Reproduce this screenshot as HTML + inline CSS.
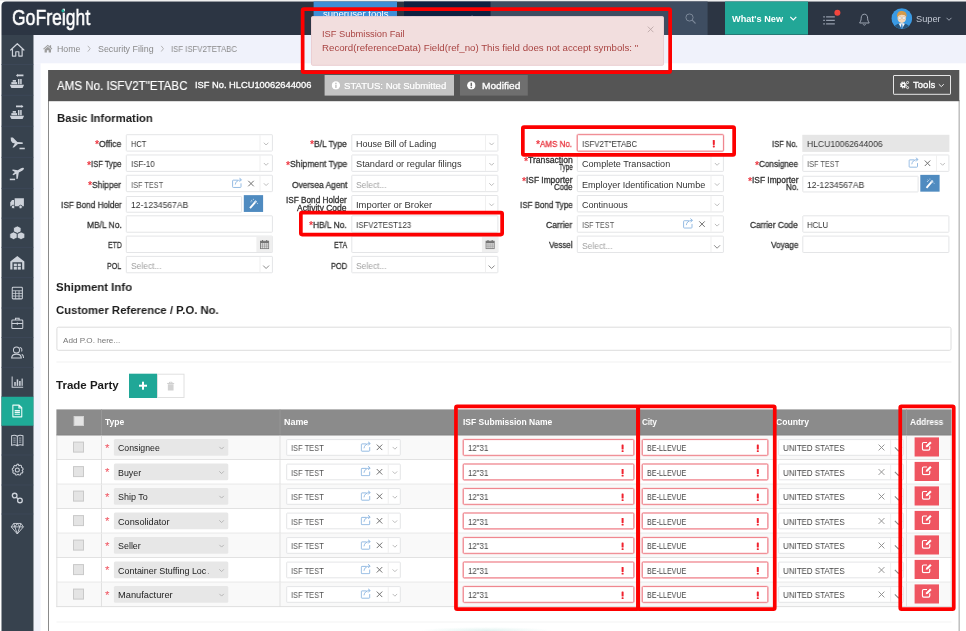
<!DOCTYPE html>
<html><head><meta charset="utf-8"><title>GoFreight ISF</title><style>
*{margin:0;padding:0}
html,body{width:966px;height:631px;overflow:hidden;background:#fff}
body{position:relative;font-family:"Liberation Sans",sans-serif}
body>div,body>span,body>svg{position:absolute;display:block}
body>svg{left:0;top:0;overflow:hidden}
body>span{white-space:nowrap;transform-origin:0 50%;will-change:transform}
</style></head><body>
<svg width="966" height="631" viewBox="0 0 966 631"><rect x="0" y="0" width="966" height="1.1" fill="#efefef"/><path d="M1.5 35V6Q1.5 1.5 6 1.5H966V35Z" fill="#2c3543"/></svg>
<span style="left:11.6px;top:4.35px;font-size:22.6px;line-height:27.12px;color:#fff;transform:scaleX(0.7782);-webkit-text-stroke:.6px #fff;">GoFreight</span>
<svg width="966" height="631" viewBox="0 0 966 631"><rect x="61.6" y="9.5" width="2.5" height="2.8" rx="0.8" fill="#1fb5a0"/><rect x="313.6" y="1.5" width="83.4" height="28.5" fill="#3f8ed6"/></svg>
<span style="left:322.5px;top:8.46px;font-size:9.5px;line-height:11.4px;color:#fff;transform:scaleX(1.0084);">superuser tools</span>
<svg width="966" height="631" viewBox="0 0 966 631"><rect x="404" y="1.5" width="86.6" height="33.5" fill="#0f2140"/></svg>
<span style="left:410px;top:13.92px;font-size:9px;line-height:10.8px;color:#56627c;transform:scaleX(1.0800);">Superuser tools</span>
<svg width="966" height="631" viewBox="0 0 966 631"><rect x="490.6" y="1.5" width="217" height="33.5" fill="#3e4d61"/><svg x="684.5" y="12.5" width="12" height="12" viewBox="0 0 12 12"><circle cx="5" cy="5" r="3.6" fill="none" stroke="#7c8899" stroke-width="1"/><path d="M7.7 7.7 L11 11" stroke="#7c8899" stroke-width="1.1" fill="none"/></svg><rect x="725" y="1.5" width="83" height="33.1" fill="#22a797"/></svg>
<span style="left:732px;top:13.52px;font-size:9px;line-height:10.8px;font-weight:bold;color:#fff;transform:scaleX(1.0170);">What's New</span>
<svg width="966" height="631" viewBox="0 0 966 631"><svg x="789.3" y="15.7" width="8" height="6" viewBox="0 0 8 6"><path d="M1 1.2 L4 4.2 L7 1.2" fill="none" stroke="#fff" stroke-width="1.2"/></svg><svg x="823" y="15.4" width="12" height="10" viewBox="0 0 12 10"><g stroke="#939cab" stroke-width="1.35"><path d="M3.1 1.5H11.8M3.1 5H11.8M3.1 8.5H11.8"/><path d="M0.2 1.5H1.9M0.2 5H1.9M0.2 8.5H1.9"/></g></svg><rect x="834.4" y="9.7" width="6" height="6" rx="3" fill="#f2453d"/><svg x="858.4" y="13" width="12" height="14" viewBox="0 0 12 14"><path d="M6 1.2 C3.6 1.2 2.8 3.2 2.8 5.2 C2.8 8 1.5 9 1.2 10 H10.8 C10.5 9 9.2 8 9.2 5.2 C9.2 3.2 8.4 1.2 6 1.2 Z" fill="none" stroke="#aab2c0" stroke-width="0.9"/><path d="M4.8 11.3 C5 12.4 7 12.4 7.2 11.3" fill="none" stroke="#aab2c0" stroke-width="0.9"/></svg><svg x="891.3" y="8.1" width="21" height="21" viewBox="0 0 21 21"><defs><clipPath id="av"><circle cx="10.5" cy="10.5" r="10.4"/></clipPath></defs><g clip-path="url(#av)"><rect width="21" height="21" fill="#3a9ae4"/><path d="M2.6 21 C2.8 16.6 6 15.4 10.5 15.4 C15 15.4 18.2 16.6 18.4 21 Z" fill="#27567f"/><path d="M7.4 15.6 L10.5 21 L13.6 15.6 C12 15 9 15 7.4 15.6 Z" fill="#f7f9fc"/><path d="M9.9 16.2 H11.1 L11.5 21 H9.5 Z" fill="#3f86c9"/><ellipse cx="10.5" cy="9.9" rx="4.3" ry="5.1" fill="#f7d9bb"/><path d="M5.7 9.2 C5.2 4.4 7.8 2.6 10.9 2.8 C14.2 3 15.9 5.2 15.3 9.2 C14.4 7.4 12.8 6.6 9.6 6.8 C7.6 6.9 6.6 7.8 5.7 9.2 Z" fill="#d39a4a"/><rect x="6.9" y="9" width="3" height="1.9" rx=".5" fill="#fff" stroke="#9a8a7a" stroke-width=".35"/><rect x="11.1" y="9" width="3" height="1.9" rx=".5" fill="#fff" stroke="#9a8a7a" stroke-width=".35"/></g></svg></svg>
<span style="left:915.6px;top:13.92px;font-size:9px;line-height:10.8px;color:#c4cad5;transform:scaleX(1.0284);">Super</span>
<svg width="966" height="631" viewBox="0 0 966 631"><svg x="945.5" y="16.8" width="7" height="5" viewBox="0 0 7 5"><path d="M1 1 L3.5 3.5 L6 1" fill="none" stroke="#aab2c0" stroke-width="0.9"/></svg><rect x="1.5" y="35" width="32.2" height="596" fill="#37424e"/><rect x="1.5" y="64" width="32.2" height="0.8" fill="#3e495a"/><rect x="1.5" y="94.8" width="32.2" height="0.8" fill="#3e495a"/><rect x="1.5" y="125.8" width="32.2" height="0.8" fill="#3e495a"/><rect x="1.5" y="156.9" width="32.2" height="0.8" fill="#3e495a"/><rect x="1.5" y="187.9" width="32.2" height="0.8" fill="#3e495a"/><rect x="1.5" y="217.7" width="32.2" height="0.8" fill="#3e495a"/><rect x="1.5" y="246.9" width="32.2" height="0.8" fill="#3e495a"/><rect x="1.5" y="277.3" width="32.2" height="0.8" fill="#3e495a"/><rect x="1.5" y="307.6" width="32.2" height="0.8" fill="#3e495a"/><rect x="1.5" y="337.2" width="32.2" height="0.8" fill="#3e495a"/><rect x="1.5" y="366.9" width="32.2" height="0.8" fill="#3e495a"/><rect x="1.5" y="396.4" width="32.2" height="0.8" fill="#3e495a"/><rect x="1.5" y="425.3" width="32.2" height="0.8" fill="#3e495a"/><rect x="1.5" y="454.6" width="32.2" height="0.8" fill="#3e495a"/><rect x="1.5" y="484.6" width="32.2" height="0.8" fill="#3e495a"/><rect x="1.5" y="513.6" width="32.2" height="0.8" fill="#3e495a"/><rect x="1.5" y="396.8" width="32.2" height="28.9" fill="#1eab97"/><svg x="8.5" y="41.2" width="17.6" height="17.6" viewBox="0 0 16 16"><path d="M2 8 L8 2.3 L14 8 M3.6 7 V13.5 H6.6 V9.6 H9.4 V13.5 H12.4 V7" fill="none" stroke="#cdd2da" stroke-width="1.1" stroke-linejoin="round" stroke-linecap="round"/></svg><svg x="8.5" y="72.2" width="17.6" height="17.6" viewBox="0 0 16 16"><g fill="#cdd2da"><path d="M1.2 11.5 H14.2 L12.8 14.4 H2.6 Z"/><rect x="2.6" y="9" width="5.2" height="1.9"/><rect x="3.8" y="7.1" width="3" height="1.6"/><rect x="8.6" y="6.2" width="1.4" height="4.7"/><rect x="10.6" y="6.2" width="1.4" height="4.7"/><path d="M6.8 2.9 L8.6 1.4 V2.2 H13.6 V3.7 H8.6 V4.4 Z"/></g></svg><svg x="8.5" y="103.2" width="17.6" height="17.6" viewBox="0 0 16 16"><g fill="#cdd2da"><path d="M1.2 11.5 H14.2 L12.8 14.4 H2.6 Z"/><rect x="2.6" y="9" width="5.2" height="1.9"/><rect x="3.8" y="7.1" width="3" height="1.6"/><rect x="8.6" y="6.2" width="1.4" height="4.7"/><rect x="10.6" y="6.2" width="1.4" height="4.7"/><path d="M13.6 2.9 L11.8 1.4 V2.2 H6.8 V3.7 H11.8 V4.4 Z"/></g></svg><svg x="8.5" y="134.2" width="17.6" height="17.6" viewBox="0 0 16 16"><g fill="#cdd2da"><path d="M2 3 L4 3 L8 7 L12 7.4 C13.6 7.6 13.6 9 12 9 L8.6 8.8 L5 12.2 L3.6 12.2 L5.8 8.4 L3.4 7.8 L2.2 6 Z" /><rect x="10" y="12.3" width="4.8" height="1.4"/></g></svg><svg x="8.5" y="164.8" width="17.6" height="17.6" viewBox="0 0 16 16"><g fill="#cdd2da"><path d="M13.8 3 C14.6 3.6 13.6 4.8 12.4 5.4 L9.4 7 L8.4 12.6 L7.2 12.8 L7 8.2 L4.4 9.4 L3.6 8.8 L5.8 6.6 L3 4.8 L4.2 4.2 L8.4 5 L11.4 3.2 C12.4 2.6 13.2 2.6 13.8 3 Z"/><rect x="1.2" y="12.6" width="4.8" height="1.4"/></g></svg><svg x="8.5" y="194.2" width="17.6" height="17.6" viewBox="0 0 16 16"><g fill="#cdd2da"><path d="M5.6 3.6 H14 V11 H5.6 Z"/><path d="M1.6 7.6 L3.2 5.2 H5 V11 H1.6 Z"/><circle cx="4.2" cy="11.6" r="1.6" stroke="#37424e" stroke-width=".7"/><circle cx="11" cy="11.6" r="1.6" stroke="#37424e" stroke-width=".7"/></g></svg><svg x="8.5" y="224.2" width="17.6" height="17.6" viewBox="0 0 16 16"><g fill="#cdd2da" stroke="#37424e" stroke-width=".7"><path d="M8 1.6 L11.4 3.2 V6.8 L8 8.4 L4.6 6.8 V3.2 Z"/><path d="M4.6 7 L8 8.6 V12.4 L4.6 14 L1.2 12.4 V8.6 Z"/><path d="M11.4 7 L14.8 8.6 V12.4 L11.4 14 L8 12.4 V8.6 Z"/></g></svg><svg x="8.5" y="254.2" width="17.6" height="17.6" viewBox="0 0 16 16"><g fill="#cdd2da"><path d="M1.6 6.6 L8 1.6 L14.4 6.6 V14 H12.4 V7.4 H3.6 V14 H1.6 Z"/><rect x="4.8" y="8.6" width="2.8" height="2.4"/><rect x="8.4" y="8.6" width="2.8" height="2.4"/><rect x="4.8" y="11.6" width="2.8" height="2.4"/><rect x="8.4" y="11.6" width="2.8" height="2.4"/></g></svg><svg x="9.2" y="284.9" width="16.2" height="16.2" viewBox="0 0 16 16"><g fill="none" stroke="#cdd2da" stroke-width="1"><rect x="3" y="2.4" width="10" height="11.4" rx=".8"/><path d="M3 5.8 H13 M3 8.4 H13 M3 11 H13 M6.3 5.8 V13.8 M9.7 5.8 V13.8" stroke-width=".8"/></g></svg><svg x="9.2" y="314.9" width="16.2" height="16.2" viewBox="0 0 16 16"><g fill="none" stroke="#cdd2da" stroke-width="1"><rect x="2.6" y="5" width="10.8" height="8.4" rx=".8"/><path d="M6.2 5 V3.2 H9.8 V5 M2.6 8.6 H13.4 M8 7.6 V9.8"/></g></svg><svg x="9.2" y="344.4" width="16.2" height="16.2" viewBox="0 0 16 16"><g fill="none" stroke="#cdd2da" stroke-width="1"><circle cx="7.2" cy="5.6" r="3"/><path d="M2.4 13.4 C2.6 10.4 5 9.6 7.2 9.6 C9.4 9.6 11.8 10.4 12 13.4 Z"/><path d="M10.4 3 C12.4 3.2 13 5.4 12.2 7 M12.4 9.8 C13.6 10.4 14.2 11.4 14.2 13.4"/></g></svg><svg x="9.2" y="373.9" width="16.2" height="16.2" viewBox="0 0 16 16"><g fill="#cdd2da"><path d="M2.4 2.6 H3.4 V12.6 H13.8 V13.6 H2.4 Z"/><rect x="5" y="8" width="1.5" height="3.8"/><rect x="7.4" y="5.4" width="1.5" height="6.4"/><rect x="9.8" y="7" width="1.5" height="4.8"/><rect x="12.2" y="4.6" width="1.2" height="7.2"/></g></svg><svg x="9.2" y="402.9" width="16.2" height="16.2" viewBox="0 0 16 16"><g fill="none" stroke="#e8fbf7" stroke-width="1.1"><path d="M3.6 2.2 H9.8 L12.4 4.8 V13.8 H3.6 Z M9.6 2.4 V5 H12.2" stroke-linejoin="round"/><path d="M5.4 7.6 H10.6 M5.4 9.4 H10.6 M5.4 11.2 H10.6" stroke-width="1.2"/></g></svg><svg x="9.2" y="432.4" width="16.2" height="16.2" viewBox="0 0 16 16"><g fill="none" stroke="#cdd2da" stroke-width="1"><path d="M2.4 3.4 C4.4 2.6 6.4 2.8 8 3.8 C9.6 2.8 11.6 2.6 13.6 3.4 V12.8 C11.6 12 9.6 12.2 8 13.2 C6.4 12.2 4.4 12 2.4 12.8 Z M8 3.8 V13.2"/><path d="M4 5.6 H6.4 M4 7.6 H6.4 M4 9.6 H6.4 M9.6 5.6 H12 M9.6 7.6 H12 M9.6 9.6 H12" stroke-width=".7"/></g></svg><svg x="9.2" y="461.9" width="16.2" height="16.2" viewBox="0 0 16 16"><g fill="none" stroke="#cdd2da" stroke-width="1"><circle cx="8" cy="8" r="2"/><path d="M8 2.2 L9.2 2.4 L9.6 3.8 L11 3.2 L12.2 4 L12 5.4 L13.4 6 L13.8 7.4 L12.8 8.4 L13.6 9.8 L13 11 L11.6 11 L11.2 12.6 L9.8 13 L8.8 12 L7.4 13 L6 12.6 L5.8 11.2 L4.2 11.2 L3.4 10 L4.2 8.8 L3 7.8 L3.2 6.4 L4.6 5.8 L4.4 4.4 L5.6 3.4 L6.8 4 Z" stroke-linejoin="round"/></g></svg><svg x="9.2" y="489.9" width="16.2" height="16.2" viewBox="0 0 16 16"><g fill="none" stroke="#cdd2da" stroke-width="1.3"><circle cx="5.4" cy="5.6" r="2.3"/><circle cx="10.6" cy="10.4" r="2.3"/><path d="M7 7.2 L9 9"/></g></svg><svg x="9.2" y="520.4" width="16.2" height="16.2" viewBox="0 0 16 16"><g fill="none" stroke="#cdd2da" stroke-width=".9" stroke-linejoin="round"><path d="M4.4 3 H11.6 L14 6.4 L8 13.4 L2 6.4 Z"/><path d="M2 6.4 H14 M5.6 6.4 L8 13.4 L10.4 6.4 M4.4 3 L5.6 6.4 L8 3 L10.4 6.4 L11.6 3"/></g></svg><rect x="33.7" y="35" width="932.3" height="28.5" fill="#f0f2fb"/><rect x="33.7" y="63.5" width="7" height="567.5" fill="#f0f2fb"/><rect x="40.7" y="63.5" width="925.3" height="567.5" fill="#fff"/><svg x="42.8" y="44" width="10" height="9" viewBox="0 0 10 9"><path d="M0.4 4.8 L5 0.8 L7 2.5 V1.2 H8.3 V3.6 L9.6 4.8 L9 5.4 L5 2 L1 5.4 Z M1.8 5.4 L5 2.8 L8.2 5.4 V8.6 H5.9 V6.2 H4.1 V8.6 H1.8 Z" fill="#9c9c9c"/></svg></svg>
<span style="left:56.5px;top:44.38px;font-size:8.5px;line-height:10.2px;color:#8a8a8a;transform:scaleX(1.0364);">Home</span>
<svg width="966" height="631" viewBox="0 0 966 631"><svg x="87" y="45.2" width="4" height="7" viewBox="0 0 4 7"><path d="M.8 .6 L3.2 3.5 L.8 6.4" fill="none" stroke="#a6a6a6" stroke-width=".8"/></svg></svg>
<span style="left:97.8px;top:44.38px;font-size:8.5px;line-height:10.2px;color:#8a8a8a;transform:scaleX(1.0435);">Security Filing</span>
<svg width="966" height="631" viewBox="0 0 966 631"><svg x="160.3" y="45.2" width="4" height="7" viewBox="0 0 4 7"><path d="M.8 .6 L3.2 3.5 L.8 6.4" fill="none" stroke="#a6a6a6" stroke-width=".8"/></svg></svg>
<span style="left:170.6px;top:44.38px;font-size:8.5px;line-height:10.2px;color:#8a8a8a;transform:scaleX(0.9153);">ISF ISFV2TETABC</span>
<svg width="966" height="631" viewBox="0 0 966 631"><rect x="48.1" y="100" width="0.8" height="531" fill="#6e6e6e"/><rect x="958.6" y="100" width="1.1" height="531" fill="#a8a8a8"/><rect x="48.1" y="70" width="911.2" height="31.2" fill="#555555"/></svg>
<span style="left:56.5px;top:77.94px;font-size:12.8px;line-height:15.36px;color:#fff;transform:scaleX(0.9036);-webkit-text-stroke:.15px #fff;">AMS No. ISFV2T"ETABC</span>
<span style="left:195px;top:80.06px;font-size:9.3px;line-height:11.16px;color:#fff;transform:scaleX(1.0006);-webkit-text-stroke:.3px #fff;">ISF No. HLCU10062644006</span>
<svg width="966" height="631" viewBox="0 0 966 631"><rect x="324.6" y="75" width="129.4" height="20.6" fill="#c3c3c3"/><svg x="331.6" y="81.1" width="8.6" height="8.6" viewBox="0 0 7 7"><circle cx="3.5" cy="3.5" r="3.4" fill="#fff"/><rect x="2.9" y="2.9" width="1.2" height="2.7" fill="#c3c3c3"/><rect x="2.9" y="1.3" width="1.2" height="1.1" fill="#c3c3c3"/></svg></svg>
<span style="left:343.7px;top:80.86px;font-size:9.3px;line-height:11.16px;color:#fff;transform:scaleX(1.0291);-webkit-text-stroke:.2px #fff;">STATUS: Not Submitted</span>
<svg width="966" height="631" viewBox="0 0 966 631"><rect x="460" y="75" width="67.8" height="20.6" fill="#6f6f6f"/><svg x="467" y="81.1" width="8.6" height="8.6" viewBox="0 0 7 7"><circle cx="3.5" cy="3.5" r="3.4" fill="#fff"/><rect x="2.9" y="1.3" width="1.2" height="2.8" fill="#6f6f6f"/><rect x="2.9" y="4.6" width="1.2" height="1.1" fill="#6f6f6f"/></svg></svg>
<span style="left:482px;top:80.96px;font-size:9.3px;line-height:11.16px;color:#fff;transform:scaleX(1.0895);-webkit-text-stroke:.3px #fff;">Modified</span>
<svg width="966" height="631" viewBox="0 0 966 631"><rect x="893.5" y="75.5" width="57" height="18.8" rx="0.5" fill="none" stroke="#e6e6e6" stroke-width="1"/><svg x="899.6" y="80" width="10" height="10" viewBox="0 0 10 10"><circle cx="3.7" cy="5" r="2.9" fill="none" stroke="#fff" stroke-width="1.1" stroke-dasharray="1.3 .98"/><circle cx="3.7" cy="5" r="1.75" fill="none" stroke="#fff" stroke-width="1.5"/><circle cx="8" cy="2.5" r="1.05" fill="none" stroke="#fff" stroke-width=".85"/><circle cx="8" cy="7.6" r="1.05" fill="none" stroke="#fff" stroke-width=".85"/></svg></svg>
<span style="left:912.9px;top:80.26px;font-size:9.3px;line-height:11.16px;color:#fff;transform:scaleX(1.0271);-webkit-text-stroke:.3px #fff;">Tools</span>
<svg width="966" height="631" viewBox="0 0 966 631"><svg x="937.8" y="83.2" width="7" height="5" viewBox="0 0 7 5"><path d="M1 1 L3.5 3.4 L6 1" fill="none" stroke="#fff" stroke-width="0.9"/></svg></svg>
<span style="left:56.7px;top:112.22px;font-size:11.5px;line-height:13.8px;font-weight:bold;color:#1c1c1c;transform:scaleX(0.9863);">Basic Information</span>
<span style="left:56.4px;top:281.42px;font-size:11.5px;line-height:13.8px;font-weight:bold;color:#1c1c1c;transform:scaleX(0.9927);">Shipment Info</span>
<span style="left:56.4px;top:304.32px;font-size:11.5px;line-height:13.8px;font-weight:bold;color:#1c1c1c;transform:scaleX(0.9842);">Customer Reference / P.O. No.</span>
<span style="left:56.4px;top:378.92px;font-size:11.5px;line-height:13.8px;font-weight:bold;color:#1c1c1c;transform:scaleX(1.0009);">Trade Party</span>
<span style="left:99.3px;top:139.08px;font-size:8.7px;line-height:10.44px;color:#333;transform:scaleX(0.9838);-webkit-text-stroke:.28px #333;">Office</span>
<span style="left:95.31px;top:138.34px;font-size:10.5px;line-height:12.6px;font-weight:bold;color:#ee3a44;transform:scaleX(1.0000);">*</span>
<svg width="966" height="631" viewBox="0 0 966 631"><rect x="126.3" y="134.7" width="146.1" height="16.4" rx="0.5" fill="#fff" stroke="#e4e5e7" stroke-width="1"/><rect x="259.6" y="135.2" width="0.8" height="15.4" fill="#ececec"/><svg x="263.1" y="142.1" width="6.00" height="3.60" viewBox="0 0 6 3.6"><path d="M0.7 0.6 L3 2.9 L5.3 0.6" fill="none" stroke="#b5b5b5" stroke-width="0.9"/></svg></svg>
<span style="left:130.6px;top:138.98px;font-size:8.7px;line-height:10.44px;color:#333;transform:scaleX(0.8557);">HCT</span>
<span style="left:91.1px;top:159.36px;font-size:8.7px;line-height:10.44px;color:#333;transform:scaleX(0.8772);-webkit-text-stroke:.28px #333;">ISF Type</span>
<span style="left:87.11px;top:158.62px;font-size:10.5px;line-height:12.6px;font-weight:bold;color:#ee3a44;transform:scaleX(1.0000);">*</span>
<svg width="966" height="631" viewBox="0 0 966 631"><rect x="126.3" y="154.98" width="146.1" height="16.4" rx="0.5" fill="#fff" stroke="#e4e5e7" stroke-width="1"/><rect x="259.6" y="155.48" width="0.8" height="15.4" fill="#ececec"/><svg x="263.1" y="162.38" width="6.00" height="3.60" viewBox="0 0 6 3.6"><path d="M0.7 0.6 L3 2.9 L5.3 0.6" fill="none" stroke="#b5b5b5" stroke-width="0.9"/></svg></svg>
<span style="left:130.6px;top:159.26px;font-size:8.7px;line-height:10.44px;color:#333;transform:scaleX(0.9039);">ISF-10</span>
<span style="left:92.4px;top:179.64px;font-size:8.7px;line-height:10.44px;color:#333;transform:scaleX(0.9704);-webkit-text-stroke:.28px #333;">Shipper</span>
<span style="left:88.41px;top:178.9px;font-size:10.5px;line-height:12.6px;font-weight:bold;color:#ee3a44;transform:scaleX(1.0000);">*</span>
<svg width="966" height="631" viewBox="0 0 966 631"><rect x="126.3" y="175.26" width="146.1" height="16.4" rx="0.5" fill="#fff" stroke="#e4e5e7" stroke-width="1"/><rect x="259.6" y="175.76" width="0.8" height="15.4" fill="#ececec"/><svg x="263.1" y="182.66" width="6.00" height="3.60" viewBox="0 0 6 3.6"><path d="M0.7 0.6 L3 2.9 L5.3 0.6" fill="none" stroke="#b5b5b5" stroke-width="0.9"/></svg><svg x="231.7" y="177.56" width="10.8" height="10.8" viewBox="0 0 10.8 10.8"><path d="M6.2 2.6 H1.6 Q.9 2.6 .9 3.3 V9.2 Q.9 9.9 1.6 9.9 H8.6 Q9.3 9.9 9.3 9.2 V5.8" fill="none" stroke="#8ab4e0" stroke-width=".9"/><path d="M3.6 7 C3.8 4.6 5.6 2.4 9.4 2.2 M7.6 .4 L9.8 2.2 L7.8 4.2" fill="none" stroke="#8ab4e0" stroke-width=".9"/></svg><svg x="247" y="179.56" width="8" height="8" viewBox="0 0 8 8"><path d="M1.25 1.25 L6.75 6.75 M6.75 1.25 L1.25 6.75" stroke="#6a6a6a" stroke-width="0.95" fill="none"/></svg></svg>
<span style="left:130.6px;top:179.54px;font-size:8.7px;line-height:10.44px;color:#555;transform:scaleX(0.8467);">ISF TEST</span>
<span style="left:60.7px;top:199.92px;font-size:8.7px;line-height:10.44px;color:#333;transform:scaleX(0.9453);-webkit-text-stroke:.28px #333;">ISF Bond Holder</span>
<svg width="966" height="631" viewBox="0 0 966 631"><rect x="126.3" y="196.54" width="115.3" height="15.7" rx="0.5" fill="#fff" stroke="#e4e5e7" stroke-width="1"/><rect x="243.8" y="195.14" width="19.3" height="16.8" fill="#4f8bc0"/><svg x="247.4" y="197.64" width="12" height="12" viewBox="0 0 12 12"><path d="M2.6 10.4 L8.6 3.6" stroke="#fff" stroke-width="1.9" stroke-linecap="butt"/><path d="M7.4 4.9 L8.9 3.2" stroke="#cfe0f0" stroke-width="1.9"/><path d="M3.6 2.4 L5 3.4 M6 1.2 V2.4 M9.8 5.2 L10.4 6.4 M3 4.2 H4.2" stroke="#dce9f5" stroke-width=".7"/></svg></svg>
<span style="left:130.6px;top:200.42px;font-size:8.7px;line-height:10.44px;color:#333;transform:scaleX(0.9870);">12-1234567AB</span>
<span style="left:86.7px;top:220.2px;font-size:8.7px;line-height:10.44px;color:#333;transform:scaleX(0.9683);-webkit-text-stroke:.28px #333;">MB/L No.</span>
<svg width="966" height="631" viewBox="0 0 966 631"><rect x="126.3" y="215.82" width="146.1" height="16.4" rx="0.5" fill="#fff" stroke="#e4e5e7" stroke-width="1"/></svg>
<span style="left:107.6px;top:240.48px;font-size:8.7px;line-height:10.44px;color:#333;transform:scaleX(0.7988);-webkit-text-stroke:.28px #333;">ETD</span>
<svg width="966" height="631" viewBox="0 0 966 631"><rect x="126.3" y="236.1" width="146.1" height="16.4" rx="0.5" fill="#fff" stroke="#e4e5e7" stroke-width="1"/><rect x="256.4" y="236.6" width="16" height="15.4" fill="#efefef"/><svg x="259.9" y="239.6" width="9.4" height="9.6" viewBox="0 0 9.4 9.6"><rect x=".5" y="1.6" width="8.4" height="7.5" fill="none" stroke="#737373" stroke-width=".9"/><rect x=".5" y="1.6" width="8.4" height="2" fill="#737373"/><path d="M2.6 .3 V2.4 M6.8 .3 V2.4" stroke="#737373" stroke-width="1.1"/><path d="M.5 5.4 H8.9 M.5 7.2 H8.9 M2.6 3.6 V9 M4.7 3.6 V9 M6.8 3.6 V9" stroke="#737373" stroke-width=".45"/></svg></svg>
<span style="left:107.2px;top:260.76px;font-size:8.7px;line-height:10.44px;color:#333;transform:scaleX(0.8214);-webkit-text-stroke:.28px #333;">POL</span>
<svg width="966" height="631" viewBox="0 0 966 631"><rect x="126.3" y="256.38" width="146.1" height="16.4" rx="0.5" fill="#fff" stroke="#e4e5e7" stroke-width="1"/><rect x="259.6" y="256.88" width="0.8" height="15.4" fill="#ececec"/><svg x="262.2" y="264.74" width="7.80" height="4.68" viewBox="0 0 6 3.6"><path d="M0.7 0.6 L3 2.9 L5.3 0.6" fill="none" stroke="#858585" stroke-width="0.75"/></svg></svg>
<span style="left:130.6px;top:261.06px;font-size:8.7px;line-height:10.44px;color:#a0a0a0;transform:scaleX(0.9735);">Select...</span>
<span style="left:314.2px;top:139.08px;font-size:8.7px;line-height:10.44px;color:#333;transform:scaleX(0.9688);-webkit-text-stroke:.28px #333;">B/L Type</span>
<span style="left:310.21px;top:138.34px;font-size:10.5px;line-height:12.6px;font-weight:bold;color:#ee3a44;transform:scaleX(1.0000);">*</span>
<svg width="966" height="631" viewBox="0 0 966 631"><rect x="351.8" y="134.7" width="146.1" height="16.4" rx="0.5" fill="#fff" stroke="#e4e5e7" stroke-width="1"/><rect x="485.1" y="135.2" width="0.8" height="15.4" fill="#ececec"/><svg x="488.6" y="142.1" width="6.00" height="3.60" viewBox="0 0 6 3.6"><path d="M0.7 0.6 L3 2.9 L5.3 0.6" fill="none" stroke="#b5b5b5" stroke-width="0.9"/></svg></svg>
<span style="left:356.1px;top:138.98px;font-size:8.7px;line-height:10.44px;color:#333;transform:scaleX(1.0377);">House Bill of Lading</span>
<span style="left:289.8px;top:159.36px;font-size:8.7px;line-height:10.44px;color:#333;transform:scaleX(0.9883);-webkit-text-stroke:.28px #333;">Shipment Type</span>
<span style="left:285.81px;top:158.62px;font-size:10.5px;line-height:12.6px;font-weight:bold;color:#ee3a44;transform:scaleX(1.0000);">*</span>
<svg width="966" height="631" viewBox="0 0 966 631"><rect x="351.8" y="154.98" width="146.1" height="16.4" rx="0.5" fill="#fff" stroke="#e4e5e7" stroke-width="1"/><rect x="485.1" y="155.48" width="0.8" height="15.4" fill="#ececec"/><svg x="488.6" y="162.38" width="6.00" height="3.60" viewBox="0 0 6 3.6"><path d="M0.7 0.6 L3 2.9 L5.3 0.6" fill="none" stroke="#b5b5b5" stroke-width="0.9"/></svg></svg>
<span style="left:356.1px;top:159.26px;font-size:8.7px;line-height:10.44px;color:#333;transform:scaleX(1.0610);">Standard or regular filings</span>
<span style="left:291.5px;top:179.64px;font-size:8.7px;line-height:10.44px;color:#333;transform:scaleX(0.9643);-webkit-text-stroke:.28px #333;">Oversea Agent</span>
<svg width="966" height="631" viewBox="0 0 966 631"><rect x="351.8" y="175.26" width="146.1" height="16.4" rx="0.5" fill="#fff" stroke="#e4e5e7" stroke-width="1"/><rect x="485.1" y="175.76" width="0.8" height="15.4" fill="#ececec"/><svg x="488.6" y="182.66" width="6.00" height="3.60" viewBox="0 0 6 3.6"><path d="M0.7 0.6 L3 2.9 L5.3 0.6" fill="none" stroke="#b5b5b5" stroke-width="0.9"/></svg></svg>
<span style="left:356.1px;top:179.54px;font-size:8.7px;line-height:10.44px;color:#a0a0a0;transform:scaleX(0.9735);">Select...</span>
<span style="left:286.2px;top:196.38px;font-size:8.2px;line-height:9.84px;color:#333;transform:scaleX(1.0030);-webkit-text-stroke:.28px #333;">ISF Bond Holder</span>
<span style="left:297.4px;top:203.58px;font-size:8.2px;line-height:9.84px;color:#333;transform:scaleX(1.0365);-webkit-text-stroke:.28px #333;">Activity Code</span>
<svg width="966" height="631" viewBox="0 0 966 631"><rect x="351.8" y="195.54" width="146.1" height="16.4" rx="0.5" fill="#fff" stroke="#e4e5e7" stroke-width="1"/><rect x="485.1" y="196.04" width="0.8" height="15.4" fill="#ececec"/><svg x="488.6" y="202.94" width="6.00" height="3.60" viewBox="0 0 6 3.6"><path d="M0.7 0.6 L3 2.9 L5.3 0.6" fill="none" stroke="#b5b5b5" stroke-width="0.9"/></svg></svg>
<span style="left:356.1px;top:199.82px;font-size:8.7px;line-height:10.44px;color:#333;transform:scaleX(1.0809);">Importer or Broker</span>
<span style="left:313.4px;top:220.2px;font-size:8.7px;line-height:10.44px;color:#333;transform:scaleX(0.9607);-webkit-text-stroke:.28px #333;">HB/L No.</span>
<span style="left:309.41px;top:219.46px;font-size:10.5px;line-height:12.6px;font-weight:bold;color:#ee3a44;transform:scaleX(1.0000);">*</span>
<svg width="966" height="631" viewBox="0 0 966 631"><rect x="351.8" y="215.82" width="146.1" height="16.4" rx="0.5" fill="#fff" stroke="#e4e5e7" stroke-width="1"/></svg>
<span style="left:356.1px;top:220.1px;font-size:8.7px;line-height:10.44px;color:#333;transform:scaleX(0.9060);">ISFV2TEST123</span>
<span style="left:333.8px;top:240.48px;font-size:8.7px;line-height:10.44px;color:#333;transform:scaleX(0.8111);-webkit-text-stroke:.28px #333;">ETA</span>
<svg width="966" height="631" viewBox="0 0 966 631"><rect x="351.8" y="236.1" width="146.1" height="16.4" rx="0.5" fill="#fff" stroke="#e4e5e7" stroke-width="1"/><rect x="481.9" y="236.6" width="16" height="15.4" fill="#efefef"/><svg x="485.4" y="239.6" width="9.4" height="9.6" viewBox="0 0 9.4 9.6"><rect x=".5" y="1.6" width="8.4" height="7.5" fill="none" stroke="#737373" stroke-width=".9"/><rect x=".5" y="1.6" width="8.4" height="2" fill="#737373"/><path d="M2.6 .3 V2.4 M6.8 .3 V2.4" stroke="#737373" stroke-width="1.1"/><path d="M.5 5.4 H8.9 M.5 7.2 H8.9 M2.6 3.6 V9 M4.7 3.6 V9 M6.8 3.6 V9" stroke="#737373" stroke-width=".45"/></svg></svg>
<span style="left:330.8px;top:260.76px;font-size:8.7px;line-height:10.44px;color:#333;transform:scaleX(0.8593);-webkit-text-stroke:.28px #333;">POD</span>
<svg width="966" height="631" viewBox="0 0 966 631"><rect x="351.8" y="256.38" width="146.1" height="16.4" rx="0.5" fill="#fff" stroke="#e4e5e7" stroke-width="1"/><rect x="485.1" y="256.88" width="0.8" height="15.4" fill="#ececec"/><svg x="487.7" y="264.74" width="7.80" height="4.68" viewBox="0 0 6 3.6"><path d="M0.7 0.6 L3 2.9 L5.3 0.6" fill="none" stroke="#858585" stroke-width="0.75"/></svg></svg>
<span style="left:356.1px;top:261.06px;font-size:8.7px;line-height:10.44px;color:#a0a0a0;transform:scaleX(0.9735);">Select...</span>
<span style="left:540.4px;top:139.08px;font-size:8.7px;line-height:10.44px;color:#e8323c;transform:scaleX(0.9222);-webkit-text-stroke:.28px #e8323c;">AMS No.</span>
<span style="left:536.41px;top:138.34px;font-size:10.5px;line-height:12.6px;font-weight:bold;color:#ee3a44;transform:scaleX(1.0000);">*</span>
<svg width="966" height="631" viewBox="0 0 966 631"><rect x="576.2" y="133.6" width="148.3" height="18.6" rx="2.1" fill="#f9d3d6"/><rect x="577.3" y="134.7" width="146.1" height="16.4" rx="1" fill="#fff" stroke="#ee7d86" stroke-width="1"/></svg>
<span style="left:581.6px;top:138.98px;font-size:8.7px;line-height:10.44px;color:#333;transform:scaleX(0.9074);">ISFV2T"ETABC</span>
<svg width="966" height="631" viewBox="0 0 966 631"><rect x="712.8" y="139.9" width="2" height="5" rx="0.6" fill="#f0222e"/><rect x="712.8" y="145.6" width="2" height="1.8" rx="0.6" fill="#f0222e"/></svg>
<span style="left:527.7px;top:155.82px;font-size:8.2px;line-height:9.84px;color:#333;transform:scaleX(1.0532);-webkit-text-stroke:.28px #333;">Transaction</span>
<span style="left:523.71px;top:155.02px;font-size:10.5px;line-height:12.6px;font-weight:bold;color:#ee3a44;transform:scaleX(1.0000);">*</span>
<span style="left:558.8px;top:163.02px;font-size:8.2px;line-height:9.84px;color:#333;transform:scaleX(0.7706);-webkit-text-stroke:.28px #333;">Type</span>
<svg width="966" height="631" viewBox="0 0 966 631"><rect x="577.3" y="154.98" width="146.1" height="16.4" rx="0.5" fill="#fff" stroke="#e4e5e7" stroke-width="1"/><rect x="710.6" y="155.48" width="0.8" height="15.4" fill="#ececec"/><svg x="714.1" y="162.38" width="6.00" height="3.60" viewBox="0 0 6 3.6"><path d="M0.7 0.6 L3 2.9 L5.3 0.6" fill="none" stroke="#b5b5b5" stroke-width="0.9"/></svg></svg>
<span style="left:581.6px;top:159.26px;font-size:8.7px;line-height:10.44px;color:#333;transform:scaleX(1.0434);">Complete Transaction</span>
<span style="left:526px;top:176.1px;font-size:8.2px;line-height:9.84px;color:#333;transform:scaleX(1.0205);-webkit-text-stroke:.28px #333;">ISF Importer</span>
<span style="left:522.01px;top:175.3px;font-size:10.5px;line-height:12.6px;font-weight:bold;color:#ee3a44;transform:scaleX(1.0000);">*</span>
<span style="left:554.1px;top:183.3px;font-size:8.2px;line-height:9.84px;color:#333;transform:scaleX(0.9386);-webkit-text-stroke:.28px #333;">Code</span>
<svg width="966" height="631" viewBox="0 0 966 631"><rect x="577.3" y="175.26" width="146.1" height="16.4" rx="0.5" fill="#fff" stroke="#e4e5e7" stroke-width="1"/><rect x="710.6" y="175.76" width="0.8" height="15.4" fill="#ececec"/><svg x="714.1" y="182.66" width="6.00" height="3.60" viewBox="0 0 6 3.6"><path d="M0.7 0.6 L3 2.9 L5.3 0.6" fill="none" stroke="#b5b5b5" stroke-width="0.9"/></svg></svg>
<span style="left:581.6px;top:179.54px;font-size:8.7px;line-height:10.44px;color:#333;transform:scaleX(1.0416);">Employer Identification Numbe</span>
<span style="left:519.8px;top:199.92px;font-size:8.7px;line-height:10.44px;color:#333;transform:scaleX(0.9182);-webkit-text-stroke:.28px #333;">ISF Bond Type</span>
<svg width="966" height="631" viewBox="0 0 966 631"><rect x="577.3" y="195.54" width="146.1" height="16.4" rx="0.5" fill="#fff" stroke="#e4e5e7" stroke-width="1"/><rect x="710.6" y="196.04" width="0.8" height="15.4" fill="#ececec"/><svg x="714.1" y="202.94" width="6.00" height="3.60" viewBox="0 0 6 3.6"><path d="M0.7 0.6 L3 2.9 L5.3 0.6" fill="none" stroke="#b5b5b5" stroke-width="0.9"/></svg></svg>
<span style="left:581.6px;top:199.82px;font-size:8.7px;line-height:10.44px;color:#333;transform:scaleX(1.0405);">Continuous</span>
<span style="left:546.4px;top:220.2px;font-size:8.7px;line-height:10.44px;color:#333;transform:scaleX(0.9817);-webkit-text-stroke:.28px #333;">Carrier</span>
<svg width="966" height="631" viewBox="0 0 966 631"><rect x="577.3" y="215.82" width="146.1" height="16.4" rx="0.5" fill="#fff" stroke="#e4e5e7" stroke-width="1"/><rect x="710.6" y="216.32" width="0.8" height="15.4" fill="#ececec"/><svg x="714.1" y="223.22" width="6.00" height="3.60" viewBox="0 0 6 3.6"><path d="M0.7 0.6 L3 2.9 L5.3 0.6" fill="none" stroke="#b5b5b5" stroke-width="0.9"/></svg><svg x="682.7" y="218.12" width="10.8" height="10.8" viewBox="0 0 10.8 10.8"><path d="M6.2 2.6 H1.6 Q.9 2.6 .9 3.3 V9.2 Q.9 9.9 1.6 9.9 H8.6 Q9.3 9.9 9.3 9.2 V5.8" fill="none" stroke="#8ab4e0" stroke-width=".9"/><path d="M3.6 7 C3.8 4.6 5.6 2.4 9.4 2.2 M7.6 .4 L9.8 2.2 L7.8 4.2" fill="none" stroke="#8ab4e0" stroke-width=".9"/></svg><svg x="698" y="220.12" width="8" height="8" viewBox="0 0 8 8"><path d="M1.25 1.25 L6.75 6.75 M6.75 1.25 L1.25 6.75" stroke="#6a6a6a" stroke-width="0.95" fill="none"/></svg></svg>
<span style="left:581.6px;top:220.1px;font-size:8.7px;line-height:10.44px;color:#555;transform:scaleX(0.8467);">ISF TEST</span>
<span style="left:548.9px;top:240.48px;font-size:8.7px;line-height:10.44px;color:#333;transform:scaleX(0.9207);-webkit-text-stroke:.28px #333;">Vessel</span>
<svg width="966" height="631" viewBox="0 0 966 631"><rect x="577.3" y="236.1" width="146.1" height="16.4" rx="0.5" fill="#fff" stroke="#e4e5e7" stroke-width="1"/><rect x="710.6" y="236.6" width="0.8" height="15.4" fill="#ececec"/><svg x="713.2" y="244.46" width="7.80" height="4.68" viewBox="0 0 6 3.6"><path d="M0.7 0.6 L3 2.9 L5.3 0.6" fill="none" stroke="#858585" stroke-width="0.75"/></svg></svg>
<span style="left:581.6px;top:240.78px;font-size:8.7px;line-height:10.44px;color:#a0a0a0;transform:scaleX(0.9735);">Select...</span>
<span style="left:772.4px;top:139.08px;font-size:8.7px;line-height:10.44px;color:#333;transform:scaleX(0.8681);-webkit-text-stroke:.28px #333;">ISF No.</span>
<svg width="966" height="631" viewBox="0 0 966 631"><rect x="802.3" y="134.8" width="147.1" height="17.1" fill="#e6e6e6"/></svg>
<span style="left:807.1px;top:139.48px;font-size:8.7px;line-height:10.44px;color:#333;transform:scaleX(0.9829);">HLCU10062644006</span>
<span style="left:759px;top:159.36px;font-size:8.7px;line-height:10.44px;color:#333;transform:scaleX(0.9375);-webkit-text-stroke:.28px #333;">Consignee</span>
<span style="left:755.01px;top:158.62px;font-size:10.5px;line-height:12.6px;font-weight:bold;color:#ee3a44;transform:scaleX(1.0000);">*</span>
<svg width="966" height="631" viewBox="0 0 966 631"><rect x="802.8" y="154.98" width="146.1" height="16.4" rx="0.5" fill="#fff" stroke="#e4e5e7" stroke-width="1"/><rect x="936.1" y="155.48" width="0.8" height="15.4" fill="#ececec"/><svg x="939.6" y="162.38" width="6.00" height="3.60" viewBox="0 0 6 3.6"><path d="M0.7 0.6 L3 2.9 L5.3 0.6" fill="none" stroke="#b5b5b5" stroke-width="0.9"/></svg><svg x="908.2" y="157.28" width="10.8" height="10.8" viewBox="0 0 10.8 10.8"><path d="M6.2 2.6 H1.6 Q.9 2.6 .9 3.3 V9.2 Q.9 9.9 1.6 9.9 H8.6 Q9.3 9.9 9.3 9.2 V5.8" fill="none" stroke="#8ab4e0" stroke-width=".9"/><path d="M3.6 7 C3.8 4.6 5.6 2.4 9.4 2.2 M7.6 .4 L9.8 2.2 L7.8 4.2" fill="none" stroke="#8ab4e0" stroke-width=".9"/></svg><svg x="923.5" y="159.28" width="8" height="8" viewBox="0 0 8 8"><path d="M1.25 1.25 L6.75 6.75 M6.75 1.25 L1.25 6.75" stroke="#6a6a6a" stroke-width="0.95" fill="none"/></svg></svg>
<span style="left:807.1px;top:159.26px;font-size:8.7px;line-height:10.44px;color:#555;transform:scaleX(0.8467);">ISF TEST</span>
<span style="left:751.5px;top:176.1px;font-size:8.2px;line-height:9.84px;color:#333;transform:scaleX(1.0205);-webkit-text-stroke:.28px #333;">ISF Importer</span>
<span style="left:747.51px;top:175.3px;font-size:10.5px;line-height:12.6px;font-weight:bold;color:#ee3a44;transform:scaleX(1.0000);">*</span>
<span style="left:785.6px;top:183.3px;font-size:8.2px;line-height:9.84px;color:#333;transform:scaleX(0.9717);-webkit-text-stroke:.28px #333;">No.</span>
<svg width="966" height="631" viewBox="0 0 966 631"><rect x="802.8" y="176.26" width="115.3" height="15.7" rx="0.5" fill="#fff" stroke="#e4e5e7" stroke-width="1"/><rect x="920.3" y="174.86" width="19.3" height="16.8" fill="#4f8bc0"/><svg x="923.9" y="177.36" width="12" height="12" viewBox="0 0 12 12"><path d="M2.6 10.4 L8.6 3.6" stroke="#fff" stroke-width="1.9" stroke-linecap="butt"/><path d="M7.4 4.9 L8.9 3.2" stroke="#cfe0f0" stroke-width="1.9"/><path d="M3.6 2.4 L5 3.4 M6 1.2 V2.4 M9.8 5.2 L10.4 6.4 M3 4.2 H4.2" stroke="#dce9f5" stroke-width=".7"/></svg></svg>
<span style="left:807.1px;top:180.14px;font-size:8.7px;line-height:10.44px;color:#333;transform:scaleX(0.9870);">12-1234567AB</span>
<span style="left:750.2px;top:220.2px;font-size:8.7px;line-height:10.44px;color:#333;transform:scaleX(0.9598);-webkit-text-stroke:.28px #333;">Carrier Code</span>
<svg width="966" height="631" viewBox="0 0 966 631"><rect x="802.8" y="215.82" width="146.1" height="16.4" rx="0.5" fill="#fff" stroke="#e4e5e7" stroke-width="1"/></svg>
<span style="left:807.1px;top:220.1px;font-size:8.7px;line-height:10.44px;color:#333;transform:scaleX(0.8908);">HCLU</span>
<span style="left:770.6px;top:240.48px;font-size:8.7px;line-height:10.44px;color:#333;transform:scaleX(0.9439);-webkit-text-stroke:.28px #333;">Voyage</span>
<svg width="966" height="631" viewBox="0 0 966 631"><rect x="802.8" y="236.1" width="146.1" height="16.4" rx="0.5" fill="#fff" stroke="#e4e5e7" stroke-width="1"/><rect x="56.9" y="327.2" width="894.1" height="23.1" rx="1.5" fill="#fff" stroke="#dcdcdc" stroke-width="1"/></svg>
<span style="left:62.9px;top:335.95px;font-size:7.6px;line-height:9.12px;color:#777;transform:scaleX(1.0688);">Add P.O. here...</span>
<svg width="966" height="631" viewBox="0 0 966 631"><rect x="56.4" y="361.6" width="895.1" height="0.8" fill="#eeeeee"/><rect x="56.4" y="621.6" width="895.1" height="0.8" fill="#f0f0f0"/><rect x="129" y="373.7" width="28" height="24.3" fill="#20a797"/><rect x="139" y="384.7" width="8" height="2" fill="#fff"/><rect x="142" y="381.7" width="2" height="8" fill="#fff"/><rect x="157.5" y="374.2" width="26.5" height="23.3" fill="#fff" stroke="#e0e0e0" stroke-width="1"/><svg x="166.7" y="381.4" width="8" height="9.6" viewBox="0 0 7 8.4"><path d="M.4 1.8 H6.6 M2.4 1.6 V.6 H4.6 V1.6" stroke="#c9c9c9" stroke-width=".8" fill="none"/><path d="M1 2.6 H6 V8 H1 Z" fill="#d2d2d2"/></svg><rect x="56.4" y="409.4" width="895.2" height="26.2" fill="#8b8b8b"/><rect x="101" y="409.4" width="0.8" height="26.2" fill="#9a9a9a"/><rect x="279.6" y="409.4" width="0.8" height="26.2" fill="#9a9a9a"/><rect x="457.6" y="409.4" width="0.8" height="26.2" fill="#9a9a9a"/><rect x="637.1" y="409.4" width="0.8" height="26.2" fill="#9a9a9a"/><rect x="774.6" y="409.4" width="0.8" height="26.2" fill="#9a9a9a"/><rect x="906" y="409.4" width="0.8" height="26.2" fill="#9a9a9a"/><rect x="56.4" y="434.7" width="895.2" height="0.9" fill="#7e7e7e"/><rect x="74.1" y="416.5" width="9.4" height="9" fill="#e4e4e4" stroke="#d0d0d0" stroke-width="1"/></svg>
<span style="left:105.2px;top:417.48px;font-size:8.5px;line-height:10.2px;font-weight:bold;color:#fff;transform:scaleX(1.0000);">Type</span>
<span style="left:283.7px;top:417.48px;font-size:8.5px;line-height:10.2px;font-weight:bold;color:#fff;transform:scaleX(1.0496);">Name</span>
<span style="left:462.8px;top:417.48px;font-size:8.5px;line-height:10.2px;font-weight:bold;color:#fff;transform:scaleX(0.9958);">ISF Submission Name</span>
<span style="left:641.8px;top:417.48px;font-size:8.5px;line-height:10.2px;font-weight:bold;color:#fff;transform:scaleX(0.9279);">City</span>
<span style="left:775.8px;top:417.48px;font-size:8.5px;line-height:10.2px;font-weight:bold;color:#fff;transform:scaleX(1.0128);">Country</span>
<span style="left:909.6px;top:417.48px;font-size:8.5px;line-height:10.2px;font-weight:bold;color:#fff;transform:scaleX(0.9790);">Address</span>
<svg width="966" height="631" viewBox="0 0 966 631"><rect x="56.4" y="435.6" width="895.2" height="24.5" fill="#f9f9f9"/><rect x="56.4" y="459.2" width="895.2" height="0.9" fill="#dcdcdc"/><rect x="100.95" y="435.6" width="0.9" height="24.5" fill="#dedede"/><rect x="279.55" y="435.6" width="0.9" height="24.5" fill="#dedede"/><rect x="457.55" y="435.6" width="0.9" height="24.5" fill="#dedede"/><rect x="637.05" y="435.6" width="0.9" height="24.5" fill="#dedede"/><rect x="774.55" y="435.6" width="0.9" height="24.5" fill="#dedede"/><rect x="905.95" y="435.6" width="0.9" height="24.5" fill="#dedede"/><rect x="56.4" y="435.6" width="0.9" height="24.5" fill="#dedede"/><rect x="950.7" y="435.6" width="0.9" height="24.5" fill="#dedede"/><rect x="73.5" y="442.1" width="10" height="10" rx="0" fill="#e4e4e4" stroke="#c9c9c9" stroke-width="1"/></svg>
<span style="left:104.6px;top:441.52px;font-size:11.5px;line-height:13.8px;color:#f0525e;transform:scaleX(1.0000);">*</span>
<svg width="966" height="631" viewBox="0 0 966 631"><rect x="113.9" y="439.1" width="114.4" height="16.7" rx="1.5" fill="#e7e7e7"/></svg>
<span style="left:118.2px;top:443.08px;font-size:8.5px;line-height:10.2px;color:#222;transform:scaleX(1.0285);">Consignee</span>
<svg width="966" height="631" viewBox="0 0 966 631"><svg x="218.6" y="446.2" width="6.00" height="3.60" viewBox="0 0 6 3.6"><path d="M0.7 0.6 L3 2.9 L5.3 0.6" fill="none" stroke="#b0b0b0" stroke-width="0.9"/></svg><rect x="286.7" y="439.6" width="113.6" height="15.7" rx="0.5" fill="#fff" stroke="#e4e5e7" stroke-width="1"/></svg>
<span style="left:290.5px;top:443.08px;font-size:8.5px;line-height:10.2px;color:#555;transform:scaleX(0.8828);">ISF TEST</span>
<svg width="966" height="631" viewBox="0 0 966 631"><svg x="360.4" y="441.3" width="10.8" height="10.8" viewBox="0 0 10.8 10.8"><path d="M6.2 2.6 H1.6 Q.9 2.6 .9 3.3 V9.2 Q.9 9.9 1.6 9.9 H8.6 Q9.3 9.9 9.3 9.2 V5.8" fill="none" stroke="#8ab4e0" stroke-width=".9"/><path d="M3.6 7 C3.8 4.6 5.6 2.4 9.4 2.2 M7.6 .4 L9.8 2.2 L7.8 4.2" fill="none" stroke="#8ab4e0" stroke-width=".9"/></svg><svg x="375.5" y="443.3" width="8" height="8" viewBox="0 0 8 8"><path d="M1.25 1.25 L6.75 6.75 M6.75 1.25 L1.25 6.75" stroke="#6a6a6a" stroke-width="0.95" fill="none"/></svg><rect x="387.8" y="440.1" width="0.8" height="14.7" fill="#ececec"/><svg x="391.9" y="446.3" width="6.00" height="3.60" viewBox="0 0 6 3.6"><path d="M0.7 0.6 L3 2.9 L5.3 0.6" fill="none" stroke="#b5b5b5" stroke-width="0.9"/></svg><rect x="462.2" y="438.5" width="172.7" height="17.9" rx="2.1" fill="#f9d3d6"/><rect x="463.3" y="439.6" width="170.5" height="15.7" rx="1" fill="#fff" stroke="#ee7d86" stroke-width="1"/></svg>
<span style="left:467.8px;top:443.13px;font-size:8.6px;line-height:10.32px;color:#444;transform:scaleX(0.9150);">12"31</span>
<svg width="966" height="631" viewBox="0 0 966 631"><rect x="621.6" y="444.5" width="2" height="5" rx="0.6" fill="#f0222e"/><rect x="621.6" y="450.2" width="2" height="1.8" rx="0.6" fill="#f0222e"/><rect x="641.2" y="438.5" width="127.7" height="17.9" rx="2.1" fill="#f9d3d6"/><rect x="642.3" y="439.6" width="125.5" height="15.7" rx="1" fill="#fff" stroke="#ee7d86" stroke-width="1"/></svg>
<span style="left:646.6px;top:443.13px;font-size:8.6px;line-height:10.32px;color:#444;transform:scaleX(0.8326);">BE-LLEVUE</span>
<svg width="966" height="631" viewBox="0 0 966 631"><rect x="756.8" y="444.5" width="2" height="5" rx="0.6" fill="#f0222e"/><rect x="756.8" y="450.2" width="2" height="1.8" rx="0.6" fill="#f0222e"/><rect x="778.7" y="439.6" width="124.7" height="15.7" rx="0.5" fill="#fff" stroke="#e4e5e7" stroke-width="1"/></svg>
<span style="left:782.7px;top:443.28px;font-size:8.5px;line-height:10.2px;color:#444;transform:scaleX(0.9346);">UNITED STATES</span>
<svg width="966" height="631" viewBox="0 0 966 631"><svg x="877.5" y="443.5" width="8" height="8" viewBox="0 0 8 8"><path d="M1.1 1.1 L6.9 6.9 M6.9 1.1 L1.1 6.9" stroke="#8a8a8a" stroke-width="0.9" fill="none"/></svg><rect x="890.3" y="440.1" width="0.8" height="14.7" fill="#ececec"/><svg x="893.75" y="446.51" width="9.30" height="5.58" viewBox="0 0 6 3.6"><path d="M0.7 0.6 L3 2.9 L5.3 0.6" fill="none" stroke="#8c8c8c" stroke-width="0.7"/></svg><rect x="914.6" y="437.4" width="24.4" height="19.1" fill="#ef5561"/><svg x="921.4" y="440.5" width="11.4" height="10.6" viewBox="0 0 9 8.4"><path d="M6.6 4.6 V6.6 Q6.6 7.6 5.6 7.6 H1.8 Q.8 7.6 .8 6.6 V2.6 Q.8 1.6 1.8 1.6 H4.4" fill="none" stroke="#fff" stroke-width=".95"/><path d="M3.4 5.4 L3.7 3.9 L6.9 .7 L8.1 1.9 L4.9 5.1 Z" fill="#fff"/></svg><rect x="56.4" y="460.1" width="895.2" height="24.5" fill="#fff"/><rect x="56.4" y="483.7" width="895.2" height="0.9" fill="#dcdcdc"/><rect x="100.95" y="460.1" width="0.9" height="24.5" fill="#dedede"/><rect x="279.55" y="460.1" width="0.9" height="24.5" fill="#dedede"/><rect x="457.55" y="460.1" width="0.9" height="24.5" fill="#dedede"/><rect x="637.05" y="460.1" width="0.9" height="24.5" fill="#dedede"/><rect x="774.55" y="460.1" width="0.9" height="24.5" fill="#dedede"/><rect x="905.95" y="460.1" width="0.9" height="24.5" fill="#dedede"/><rect x="56.4" y="460.1" width="0.9" height="24.5" fill="#dedede"/><rect x="950.7" y="460.1" width="0.9" height="24.5" fill="#dedede"/><rect x="73.5" y="466.6" width="10" height="10" rx="0" fill="#e4e4e4" stroke="#c9c9c9" stroke-width="1"/></svg>
<span style="left:104.6px;top:466.02px;font-size:11.5px;line-height:13.8px;color:#f0525e;transform:scaleX(1.0000);">*</span>
<svg width="966" height="631" viewBox="0 0 966 631"><rect x="113.9" y="463.6" width="114.4" height="16.7" rx="1.5" fill="#e7e7e7"/></svg>
<span style="left:118.2px;top:467.58px;font-size:8.5px;line-height:10.2px;color:#222;transform:scaleX(1.0448);">Buyer</span>
<svg width="966" height="631" viewBox="0 0 966 631"><svg x="218.6" y="470.7" width="6.00" height="3.60" viewBox="0 0 6 3.6"><path d="M0.7 0.6 L3 2.9 L5.3 0.6" fill="none" stroke="#b0b0b0" stroke-width="0.9"/></svg><rect x="286.7" y="464.1" width="113.6" height="15.7" rx="0.5" fill="#fff" stroke="#e4e5e7" stroke-width="1"/></svg>
<span style="left:290.5px;top:467.58px;font-size:8.5px;line-height:10.2px;color:#555;transform:scaleX(0.8828);">ISF TEST</span>
<svg width="966" height="631" viewBox="0 0 966 631"><svg x="360.4" y="465.8" width="10.8" height="10.8" viewBox="0 0 10.8 10.8"><path d="M6.2 2.6 H1.6 Q.9 2.6 .9 3.3 V9.2 Q.9 9.9 1.6 9.9 H8.6 Q9.3 9.9 9.3 9.2 V5.8" fill="none" stroke="#8ab4e0" stroke-width=".9"/><path d="M3.6 7 C3.8 4.6 5.6 2.4 9.4 2.2 M7.6 .4 L9.8 2.2 L7.8 4.2" fill="none" stroke="#8ab4e0" stroke-width=".9"/></svg><svg x="375.5" y="467.8" width="8" height="8" viewBox="0 0 8 8"><path d="M1.25 1.25 L6.75 6.75 M6.75 1.25 L1.25 6.75" stroke="#6a6a6a" stroke-width="0.95" fill="none"/></svg><rect x="387.8" y="464.6" width="0.8" height="14.7" fill="#ececec"/><svg x="391.9" y="470.8" width="6.00" height="3.60" viewBox="0 0 6 3.6"><path d="M0.7 0.6 L3 2.9 L5.3 0.6" fill="none" stroke="#b5b5b5" stroke-width="0.9"/></svg><rect x="462.2" y="463" width="172.7" height="17.9" rx="2.1" fill="#f9d3d6"/><rect x="463.3" y="464.1" width="170.5" height="15.7" rx="1" fill="#fff" stroke="#ee7d86" stroke-width="1"/></svg>
<span style="left:467.8px;top:467.63px;font-size:8.6px;line-height:10.32px;color:#444;transform:scaleX(0.9150);">12"31</span>
<svg width="966" height="631" viewBox="0 0 966 631"><rect x="621.6" y="469" width="2" height="5" rx="0.6" fill="#f0222e"/><rect x="621.6" y="474.7" width="2" height="1.8" rx="0.6" fill="#f0222e"/><rect x="641.2" y="463" width="127.7" height="17.9" rx="2.1" fill="#f9d3d6"/><rect x="642.3" y="464.1" width="125.5" height="15.7" rx="1" fill="#fff" stroke="#ee7d86" stroke-width="1"/></svg>
<span style="left:646.6px;top:467.63px;font-size:8.6px;line-height:10.32px;color:#444;transform:scaleX(0.8326);">BE-LLEVUE</span>
<svg width="966" height="631" viewBox="0 0 966 631"><rect x="756.8" y="469" width="2" height="5" rx="0.6" fill="#f0222e"/><rect x="756.8" y="474.7" width="2" height="1.8" rx="0.6" fill="#f0222e"/><rect x="778.7" y="464.1" width="124.7" height="15.7" rx="0.5" fill="#fff" stroke="#e4e5e7" stroke-width="1"/></svg>
<span style="left:782.7px;top:467.78px;font-size:8.5px;line-height:10.2px;color:#444;transform:scaleX(0.9346);">UNITED STATES</span>
<svg width="966" height="631" viewBox="0 0 966 631"><svg x="877.5" y="468" width="8" height="8" viewBox="0 0 8 8"><path d="M1.1 1.1 L6.9 6.9 M6.9 1.1 L1.1 6.9" stroke="#8a8a8a" stroke-width="0.9" fill="none"/></svg><rect x="890.3" y="464.6" width="0.8" height="14.7" fill="#ececec"/><svg x="893.75" y="471.01" width="9.30" height="5.58" viewBox="0 0 6 3.6"><path d="M0.7 0.6 L3 2.9 L5.3 0.6" fill="none" stroke="#8c8c8c" stroke-width="0.7"/></svg><rect x="914.6" y="461.9" width="24.4" height="19.1" fill="#ef5561"/><svg x="921.4" y="465" width="11.4" height="10.6" viewBox="0 0 9 8.4"><path d="M6.6 4.6 V6.6 Q6.6 7.6 5.6 7.6 H1.8 Q.8 7.6 .8 6.6 V2.6 Q.8 1.6 1.8 1.6 H4.4" fill="none" stroke="#fff" stroke-width=".95"/><path d="M3.4 5.4 L3.7 3.9 L6.9 .7 L8.1 1.9 L4.9 5.1 Z" fill="#fff"/></svg><rect x="56.4" y="484.6" width="895.2" height="24.5" fill="#f9f9f9"/><rect x="56.4" y="508.2" width="895.2" height="0.9" fill="#dcdcdc"/><rect x="100.95" y="484.6" width="0.9" height="24.5" fill="#dedede"/><rect x="279.55" y="484.6" width="0.9" height="24.5" fill="#dedede"/><rect x="457.55" y="484.6" width="0.9" height="24.5" fill="#dedede"/><rect x="637.05" y="484.6" width="0.9" height="24.5" fill="#dedede"/><rect x="774.55" y="484.6" width="0.9" height="24.5" fill="#dedede"/><rect x="905.95" y="484.6" width="0.9" height="24.5" fill="#dedede"/><rect x="56.4" y="484.6" width="0.9" height="24.5" fill="#dedede"/><rect x="950.7" y="484.6" width="0.9" height="24.5" fill="#dedede"/><rect x="73.5" y="491.1" width="10" height="10" rx="0" fill="#e4e4e4" stroke="#c9c9c9" stroke-width="1"/></svg>
<span style="left:104.6px;top:490.52px;font-size:11.5px;line-height:13.8px;color:#f0525e;transform:scaleX(1.0000);">*</span>
<svg width="966" height="631" viewBox="0 0 966 631"><rect x="113.9" y="488.1" width="114.4" height="16.7" rx="1.5" fill="#e7e7e7"/></svg>
<span style="left:118.2px;top:492.08px;font-size:8.5px;line-height:10.2px;color:#222;transform:scaleX(1.0568);">Ship To</span>
<svg width="966" height="631" viewBox="0 0 966 631"><svg x="218.6" y="495.2" width="6.00" height="3.60" viewBox="0 0 6 3.6"><path d="M0.7 0.6 L3 2.9 L5.3 0.6" fill="none" stroke="#b0b0b0" stroke-width="0.9"/></svg><rect x="286.7" y="488.6" width="113.6" height="15.7" rx="0.5" fill="#fff" stroke="#e4e5e7" stroke-width="1"/></svg>
<span style="left:290.5px;top:492.08px;font-size:8.5px;line-height:10.2px;color:#555;transform:scaleX(0.8828);">ISF TEST</span>
<svg width="966" height="631" viewBox="0 0 966 631"><svg x="360.4" y="490.3" width="10.8" height="10.8" viewBox="0 0 10.8 10.8"><path d="M6.2 2.6 H1.6 Q.9 2.6 .9 3.3 V9.2 Q.9 9.9 1.6 9.9 H8.6 Q9.3 9.9 9.3 9.2 V5.8" fill="none" stroke="#8ab4e0" stroke-width=".9"/><path d="M3.6 7 C3.8 4.6 5.6 2.4 9.4 2.2 M7.6 .4 L9.8 2.2 L7.8 4.2" fill="none" stroke="#8ab4e0" stroke-width=".9"/></svg><svg x="375.5" y="492.3" width="8" height="8" viewBox="0 0 8 8"><path d="M1.25 1.25 L6.75 6.75 M6.75 1.25 L1.25 6.75" stroke="#6a6a6a" stroke-width="0.95" fill="none"/></svg><rect x="387.8" y="489.1" width="0.8" height="14.7" fill="#ececec"/><svg x="391.9" y="495.3" width="6.00" height="3.60" viewBox="0 0 6 3.6"><path d="M0.7 0.6 L3 2.9 L5.3 0.6" fill="none" stroke="#b5b5b5" stroke-width="0.9"/></svg><rect x="462.2" y="487.5" width="172.7" height="17.9" rx="2.1" fill="#f9d3d6"/><rect x="463.3" y="488.6" width="170.5" height="15.7" rx="1" fill="#fff" stroke="#ee7d86" stroke-width="1"/></svg>
<span style="left:467.8px;top:492.13px;font-size:8.6px;line-height:10.32px;color:#444;transform:scaleX(0.9150);">12"31</span>
<svg width="966" height="631" viewBox="0 0 966 631"><rect x="621.6" y="493.5" width="2" height="5" rx="0.6" fill="#f0222e"/><rect x="621.6" y="499.2" width="2" height="1.8" rx="0.6" fill="#f0222e"/><rect x="641.2" y="487.5" width="127.7" height="17.9" rx="2.1" fill="#f9d3d6"/><rect x="642.3" y="488.6" width="125.5" height="15.7" rx="1" fill="#fff" stroke="#ee7d86" stroke-width="1"/></svg>
<span style="left:646.6px;top:492.13px;font-size:8.6px;line-height:10.32px;color:#444;transform:scaleX(0.8326);">BE-LLEVUE</span>
<svg width="966" height="631" viewBox="0 0 966 631"><rect x="756.8" y="493.5" width="2" height="5" rx="0.6" fill="#f0222e"/><rect x="756.8" y="499.2" width="2" height="1.8" rx="0.6" fill="#f0222e"/><rect x="778.7" y="488.6" width="124.7" height="15.7" rx="0.5" fill="#fff" stroke="#e4e5e7" stroke-width="1"/></svg>
<span style="left:782.7px;top:492.28px;font-size:8.5px;line-height:10.2px;color:#444;transform:scaleX(0.9346);">UNITED STATES</span>
<svg width="966" height="631" viewBox="0 0 966 631"><svg x="877.5" y="492.5" width="8" height="8" viewBox="0 0 8 8"><path d="M1.1 1.1 L6.9 6.9 M6.9 1.1 L1.1 6.9" stroke="#8a8a8a" stroke-width="0.9" fill="none"/></svg><rect x="890.3" y="489.1" width="0.8" height="14.7" fill="#ececec"/><svg x="893.75" y="495.51" width="9.30" height="5.58" viewBox="0 0 6 3.6"><path d="M0.7 0.6 L3 2.9 L5.3 0.6" fill="none" stroke="#8c8c8c" stroke-width="0.7"/></svg><rect x="914.6" y="486.4" width="24.4" height="19.1" fill="#ef5561"/><svg x="921.4" y="489.5" width="11.4" height="10.6" viewBox="0 0 9 8.4"><path d="M6.6 4.6 V6.6 Q6.6 7.6 5.6 7.6 H1.8 Q.8 7.6 .8 6.6 V2.6 Q.8 1.6 1.8 1.6 H4.4" fill="none" stroke="#fff" stroke-width=".95"/><path d="M3.4 5.4 L3.7 3.9 L6.9 .7 L8.1 1.9 L4.9 5.1 Z" fill="#fff"/></svg><rect x="56.4" y="509.1" width="895.2" height="24.5" fill="#fff"/><rect x="56.4" y="532.7" width="895.2" height="0.9" fill="#dcdcdc"/><rect x="100.95" y="509.1" width="0.9" height="24.5" fill="#dedede"/><rect x="279.55" y="509.1" width="0.9" height="24.5" fill="#dedede"/><rect x="457.55" y="509.1" width="0.9" height="24.5" fill="#dedede"/><rect x="637.05" y="509.1" width="0.9" height="24.5" fill="#dedede"/><rect x="774.55" y="509.1" width="0.9" height="24.5" fill="#dedede"/><rect x="905.95" y="509.1" width="0.9" height="24.5" fill="#dedede"/><rect x="56.4" y="509.1" width="0.9" height="24.5" fill="#dedede"/><rect x="950.7" y="509.1" width="0.9" height="24.5" fill="#dedede"/><rect x="73.5" y="515.6" width="10" height="10" rx="0" fill="#e4e4e4" stroke="#c9c9c9" stroke-width="1"/></svg>
<span style="left:104.6px;top:515.02px;font-size:11.5px;line-height:13.8px;color:#f0525e;transform:scaleX(1.0000);">*</span>
<svg width="966" height="631" viewBox="0 0 966 631"><rect x="113.9" y="512.6" width="114.4" height="16.7" rx="1.5" fill="#e7e7e7"/></svg>
<span style="left:118.2px;top:516.58px;font-size:8.5px;line-height:10.2px;color:#222;transform:scaleX(1.0791);">Consolidator</span>
<svg width="966" height="631" viewBox="0 0 966 631"><svg x="218.6" y="519.7" width="6.00" height="3.60" viewBox="0 0 6 3.6"><path d="M0.7 0.6 L3 2.9 L5.3 0.6" fill="none" stroke="#b0b0b0" stroke-width="0.9"/></svg><rect x="286.7" y="513.1" width="113.6" height="15.7" rx="0.5" fill="#fff" stroke="#e4e5e7" stroke-width="1"/></svg>
<span style="left:290.5px;top:516.58px;font-size:8.5px;line-height:10.2px;color:#555;transform:scaleX(0.8828);">ISF TEST</span>
<svg width="966" height="631" viewBox="0 0 966 631"><svg x="360.4" y="514.8" width="10.8" height="10.8" viewBox="0 0 10.8 10.8"><path d="M6.2 2.6 H1.6 Q.9 2.6 .9 3.3 V9.2 Q.9 9.9 1.6 9.9 H8.6 Q9.3 9.9 9.3 9.2 V5.8" fill="none" stroke="#8ab4e0" stroke-width=".9"/><path d="M3.6 7 C3.8 4.6 5.6 2.4 9.4 2.2 M7.6 .4 L9.8 2.2 L7.8 4.2" fill="none" stroke="#8ab4e0" stroke-width=".9"/></svg><svg x="375.5" y="516.8" width="8" height="8" viewBox="0 0 8 8"><path d="M1.25 1.25 L6.75 6.75 M6.75 1.25 L1.25 6.75" stroke="#6a6a6a" stroke-width="0.95" fill="none"/></svg><rect x="387.8" y="513.6" width="0.8" height="14.7" fill="#ececec"/><svg x="391.9" y="519.8" width="6.00" height="3.60" viewBox="0 0 6 3.6"><path d="M0.7 0.6 L3 2.9 L5.3 0.6" fill="none" stroke="#b5b5b5" stroke-width="0.9"/></svg><rect x="462.2" y="512" width="172.7" height="17.9" rx="2.1" fill="#f9d3d6"/><rect x="463.3" y="513.1" width="170.5" height="15.7" rx="1" fill="#fff" stroke="#ee7d86" stroke-width="1"/></svg>
<span style="left:467.8px;top:516.63px;font-size:8.6px;line-height:10.32px;color:#444;transform:scaleX(0.9150);">12"31</span>
<svg width="966" height="631" viewBox="0 0 966 631"><rect x="621.6" y="518" width="2" height="5" rx="0.6" fill="#f0222e"/><rect x="621.6" y="523.7" width="2" height="1.8" rx="0.6" fill="#f0222e"/><rect x="641.2" y="512" width="127.7" height="17.9" rx="2.1" fill="#f9d3d6"/><rect x="642.3" y="513.1" width="125.5" height="15.7" rx="1" fill="#fff" stroke="#ee7d86" stroke-width="1"/></svg>
<span style="left:646.6px;top:516.63px;font-size:8.6px;line-height:10.32px;color:#444;transform:scaleX(0.8326);">BE-LLEVUE</span>
<svg width="966" height="631" viewBox="0 0 966 631"><rect x="756.8" y="518" width="2" height="5" rx="0.6" fill="#f0222e"/><rect x="756.8" y="523.7" width="2" height="1.8" rx="0.6" fill="#f0222e"/><rect x="778.7" y="513.1" width="124.7" height="15.7" rx="0.5" fill="#fff" stroke="#e4e5e7" stroke-width="1"/></svg>
<span style="left:782.7px;top:516.78px;font-size:8.5px;line-height:10.2px;color:#444;transform:scaleX(0.9346);">UNITED STATES</span>
<svg width="966" height="631" viewBox="0 0 966 631"><svg x="877.5" y="517" width="8" height="8" viewBox="0 0 8 8"><path d="M1.1 1.1 L6.9 6.9 M6.9 1.1 L1.1 6.9" stroke="#8a8a8a" stroke-width="0.9" fill="none"/></svg><rect x="890.3" y="513.6" width="0.8" height="14.7" fill="#ececec"/><svg x="893.75" y="520.01" width="9.30" height="5.58" viewBox="0 0 6 3.6"><path d="M0.7 0.6 L3 2.9 L5.3 0.6" fill="none" stroke="#8c8c8c" stroke-width="0.7"/></svg><rect x="914.6" y="510.9" width="24.4" height="19.1" fill="#ef5561"/><svg x="921.4" y="514" width="11.4" height="10.6" viewBox="0 0 9 8.4"><path d="M6.6 4.6 V6.6 Q6.6 7.6 5.6 7.6 H1.8 Q.8 7.6 .8 6.6 V2.6 Q.8 1.6 1.8 1.6 H4.4" fill="none" stroke="#fff" stroke-width=".95"/><path d="M3.4 5.4 L3.7 3.9 L6.9 .7 L8.1 1.9 L4.9 5.1 Z" fill="#fff"/></svg><rect x="56.4" y="533.6" width="895.2" height="24.5" fill="#f9f9f9"/><rect x="56.4" y="557.2" width="895.2" height="0.9" fill="#dcdcdc"/><rect x="100.95" y="533.6" width="0.9" height="24.5" fill="#dedede"/><rect x="279.55" y="533.6" width="0.9" height="24.5" fill="#dedede"/><rect x="457.55" y="533.6" width="0.9" height="24.5" fill="#dedede"/><rect x="637.05" y="533.6" width="0.9" height="24.5" fill="#dedede"/><rect x="774.55" y="533.6" width="0.9" height="24.5" fill="#dedede"/><rect x="905.95" y="533.6" width="0.9" height="24.5" fill="#dedede"/><rect x="56.4" y="533.6" width="0.9" height="24.5" fill="#dedede"/><rect x="950.7" y="533.6" width="0.9" height="24.5" fill="#dedede"/><rect x="73.5" y="540.1" width="10" height="10" rx="0" fill="#e4e4e4" stroke="#c9c9c9" stroke-width="1"/></svg>
<span style="left:104.6px;top:539.52px;font-size:11.5px;line-height:13.8px;color:#f0525e;transform:scaleX(1.0000);">*</span>
<svg width="966" height="631" viewBox="0 0 966 631"><rect x="113.9" y="537.1" width="114.4" height="16.7" rx="1.5" fill="#e7e7e7"/></svg>
<span style="left:118.2px;top:541.08px;font-size:8.5px;line-height:10.2px;color:#222;transform:scaleX(1.0491);">Seller</span>
<svg width="966" height="631" viewBox="0 0 966 631"><svg x="218.6" y="544.2" width="6.00" height="3.60" viewBox="0 0 6 3.6"><path d="M0.7 0.6 L3 2.9 L5.3 0.6" fill="none" stroke="#b0b0b0" stroke-width="0.9"/></svg><rect x="286.7" y="537.6" width="113.6" height="15.7" rx="0.5" fill="#fff" stroke="#e4e5e7" stroke-width="1"/></svg>
<span style="left:290.5px;top:541.08px;font-size:8.5px;line-height:10.2px;color:#555;transform:scaleX(0.8828);">ISF TEST</span>
<svg width="966" height="631" viewBox="0 0 966 631"><svg x="360.4" y="539.3" width="10.8" height="10.8" viewBox="0 0 10.8 10.8"><path d="M6.2 2.6 H1.6 Q.9 2.6 .9 3.3 V9.2 Q.9 9.9 1.6 9.9 H8.6 Q9.3 9.9 9.3 9.2 V5.8" fill="none" stroke="#8ab4e0" stroke-width=".9"/><path d="M3.6 7 C3.8 4.6 5.6 2.4 9.4 2.2 M7.6 .4 L9.8 2.2 L7.8 4.2" fill="none" stroke="#8ab4e0" stroke-width=".9"/></svg><svg x="375.5" y="541.3" width="8" height="8" viewBox="0 0 8 8"><path d="M1.25 1.25 L6.75 6.75 M6.75 1.25 L1.25 6.75" stroke="#6a6a6a" stroke-width="0.95" fill="none"/></svg><rect x="387.8" y="538.1" width="0.8" height="14.7" fill="#ececec"/><svg x="391.9" y="544.3" width="6.00" height="3.60" viewBox="0 0 6 3.6"><path d="M0.7 0.6 L3 2.9 L5.3 0.6" fill="none" stroke="#b5b5b5" stroke-width="0.9"/></svg><rect x="462.2" y="536.5" width="172.7" height="17.9" rx="2.1" fill="#f9d3d6"/><rect x="463.3" y="537.6" width="170.5" height="15.7" rx="1" fill="#fff" stroke="#ee7d86" stroke-width="1"/></svg>
<span style="left:467.8px;top:541.13px;font-size:8.6px;line-height:10.32px;color:#444;transform:scaleX(0.9150);">12"31</span>
<svg width="966" height="631" viewBox="0 0 966 631"><rect x="621.6" y="542.5" width="2" height="5" rx="0.6" fill="#f0222e"/><rect x="621.6" y="548.2" width="2" height="1.8" rx="0.6" fill="#f0222e"/><rect x="641.2" y="536.5" width="127.7" height="17.9" rx="2.1" fill="#f9d3d6"/><rect x="642.3" y="537.6" width="125.5" height="15.7" rx="1" fill="#fff" stroke="#ee7d86" stroke-width="1"/></svg>
<span style="left:646.6px;top:541.13px;font-size:8.6px;line-height:10.32px;color:#444;transform:scaleX(0.8326);">BE-LLEVUE</span>
<svg width="966" height="631" viewBox="0 0 966 631"><rect x="756.8" y="542.5" width="2" height="5" rx="0.6" fill="#f0222e"/><rect x="756.8" y="548.2" width="2" height="1.8" rx="0.6" fill="#f0222e"/><rect x="778.7" y="537.6" width="124.7" height="15.7" rx="0.5" fill="#fff" stroke="#e4e5e7" stroke-width="1"/></svg>
<span style="left:782.7px;top:541.28px;font-size:8.5px;line-height:10.2px;color:#444;transform:scaleX(0.9346);">UNITED STATES</span>
<svg width="966" height="631" viewBox="0 0 966 631"><svg x="877.5" y="541.5" width="8" height="8" viewBox="0 0 8 8"><path d="M1.1 1.1 L6.9 6.9 M6.9 1.1 L1.1 6.9" stroke="#8a8a8a" stroke-width="0.9" fill="none"/></svg><rect x="890.3" y="538.1" width="0.8" height="14.7" fill="#ececec"/><svg x="893.75" y="544.51" width="9.30" height="5.58" viewBox="0 0 6 3.6"><path d="M0.7 0.6 L3 2.9 L5.3 0.6" fill="none" stroke="#8c8c8c" stroke-width="0.7"/></svg><rect x="914.6" y="535.4" width="24.4" height="19.1" fill="#ef5561"/><svg x="921.4" y="538.5" width="11.4" height="10.6" viewBox="0 0 9 8.4"><path d="M6.6 4.6 V6.6 Q6.6 7.6 5.6 7.6 H1.8 Q.8 7.6 .8 6.6 V2.6 Q.8 1.6 1.8 1.6 H4.4" fill="none" stroke="#fff" stroke-width=".95"/><path d="M3.4 5.4 L3.7 3.9 L6.9 .7 L8.1 1.9 L4.9 5.1 Z" fill="#fff"/></svg><rect x="56.4" y="558.1" width="895.2" height="24.5" fill="#fff"/><rect x="56.4" y="581.7" width="895.2" height="0.9" fill="#dcdcdc"/><rect x="100.95" y="558.1" width="0.9" height="24.5" fill="#dedede"/><rect x="279.55" y="558.1" width="0.9" height="24.5" fill="#dedede"/><rect x="457.55" y="558.1" width="0.9" height="24.5" fill="#dedede"/><rect x="637.05" y="558.1" width="0.9" height="24.5" fill="#dedede"/><rect x="774.55" y="558.1" width="0.9" height="24.5" fill="#dedede"/><rect x="905.95" y="558.1" width="0.9" height="24.5" fill="#dedede"/><rect x="56.4" y="558.1" width="0.9" height="24.5" fill="#dedede"/><rect x="950.7" y="558.1" width="0.9" height="24.5" fill="#dedede"/><rect x="73.5" y="564.6" width="10" height="10" rx="0" fill="#e4e4e4" stroke="#c9c9c9" stroke-width="1"/></svg>
<span style="left:104.6px;top:564.02px;font-size:11.5px;line-height:13.8px;color:#f0525e;transform:scaleX(1.0000);">*</span>
<svg width="966" height="631" viewBox="0 0 966 631"><rect x="113.9" y="561.6" width="114.4" height="16.7" rx="1.5" fill="#e7e7e7"/></svg>
<span style="left:118.2px;top:565.58px;font-size:8.5px;line-height:10.2px;color:#222;transform:scaleX(1.0517);">Container Stuffing Loc</span>
<span style="left:207.2px;top:565.58px;font-size:8.5px;line-height:10.2px;color:#999;transform:scaleX(1.2000);">.</span>
<svg width="966" height="631" viewBox="0 0 966 631"><svg x="218.6" y="568.7" width="6.00" height="3.60" viewBox="0 0 6 3.6"><path d="M0.7 0.6 L3 2.9 L5.3 0.6" fill="none" stroke="#b0b0b0" stroke-width="0.9"/></svg><rect x="286.7" y="562.1" width="113.6" height="15.7" rx="0.5" fill="#fff" stroke="#e4e5e7" stroke-width="1"/></svg>
<span style="left:290.5px;top:565.58px;font-size:8.5px;line-height:10.2px;color:#555;transform:scaleX(0.8828);">ISF TEST</span>
<svg width="966" height="631" viewBox="0 0 966 631"><svg x="360.4" y="563.8" width="10.8" height="10.8" viewBox="0 0 10.8 10.8"><path d="M6.2 2.6 H1.6 Q.9 2.6 .9 3.3 V9.2 Q.9 9.9 1.6 9.9 H8.6 Q9.3 9.9 9.3 9.2 V5.8" fill="none" stroke="#8ab4e0" stroke-width=".9"/><path d="M3.6 7 C3.8 4.6 5.6 2.4 9.4 2.2 M7.6 .4 L9.8 2.2 L7.8 4.2" fill="none" stroke="#8ab4e0" stroke-width=".9"/></svg><svg x="375.5" y="565.8" width="8" height="8" viewBox="0 0 8 8"><path d="M1.25 1.25 L6.75 6.75 M6.75 1.25 L1.25 6.75" stroke="#6a6a6a" stroke-width="0.95" fill="none"/></svg><rect x="387.8" y="562.6" width="0.8" height="14.7" fill="#ececec"/><svg x="391.9" y="568.8" width="6.00" height="3.60" viewBox="0 0 6 3.6"><path d="M0.7 0.6 L3 2.9 L5.3 0.6" fill="none" stroke="#b5b5b5" stroke-width="0.9"/></svg><rect x="462.2" y="561" width="172.7" height="17.9" rx="2.1" fill="#f9d3d6"/><rect x="463.3" y="562.1" width="170.5" height="15.7" rx="1" fill="#fff" stroke="#ee7d86" stroke-width="1"/></svg>
<span style="left:467.8px;top:565.63px;font-size:8.6px;line-height:10.32px;color:#444;transform:scaleX(0.9150);">12"31</span>
<svg width="966" height="631" viewBox="0 0 966 631"><rect x="621.6" y="567" width="2" height="5" rx="0.6" fill="#f0222e"/><rect x="621.6" y="572.7" width="2" height="1.8" rx="0.6" fill="#f0222e"/><rect x="641.2" y="561" width="127.7" height="17.9" rx="2.1" fill="#f9d3d6"/><rect x="642.3" y="562.1" width="125.5" height="15.7" rx="1" fill="#fff" stroke="#ee7d86" stroke-width="1"/></svg>
<span style="left:646.6px;top:565.63px;font-size:8.6px;line-height:10.32px;color:#444;transform:scaleX(0.8326);">BE-LLEVUE</span>
<svg width="966" height="631" viewBox="0 0 966 631"><rect x="756.8" y="567" width="2" height="5" rx="0.6" fill="#f0222e"/><rect x="756.8" y="572.7" width="2" height="1.8" rx="0.6" fill="#f0222e"/><rect x="778.7" y="562.1" width="124.7" height="15.7" rx="0.5" fill="#fff" stroke="#e4e5e7" stroke-width="1"/></svg>
<span style="left:782.7px;top:565.78px;font-size:8.5px;line-height:10.2px;color:#444;transform:scaleX(0.9346);">UNITED STATES</span>
<svg width="966" height="631" viewBox="0 0 966 631"><svg x="877.5" y="566" width="8" height="8" viewBox="0 0 8 8"><path d="M1.1 1.1 L6.9 6.9 M6.9 1.1 L1.1 6.9" stroke="#8a8a8a" stroke-width="0.9" fill="none"/></svg><rect x="890.3" y="562.6" width="0.8" height="14.7" fill="#ececec"/><svg x="893.75" y="569.01" width="9.30" height="5.58" viewBox="0 0 6 3.6"><path d="M0.7 0.6 L3 2.9 L5.3 0.6" fill="none" stroke="#8c8c8c" stroke-width="0.7"/></svg><rect x="914.6" y="559.9" width="24.4" height="19.1" fill="#ef5561"/><svg x="921.4" y="563" width="11.4" height="10.6" viewBox="0 0 9 8.4"><path d="M6.6 4.6 V6.6 Q6.6 7.6 5.6 7.6 H1.8 Q.8 7.6 .8 6.6 V2.6 Q.8 1.6 1.8 1.6 H4.4" fill="none" stroke="#fff" stroke-width=".95"/><path d="M3.4 5.4 L3.7 3.9 L6.9 .7 L8.1 1.9 L4.9 5.1 Z" fill="#fff"/></svg><rect x="56.4" y="582.6" width="895.2" height="24.5" fill="#f9f9f9"/><rect x="56.4" y="606.2" width="895.2" height="0.9" fill="#dcdcdc"/><rect x="100.95" y="582.6" width="0.9" height="24.5" fill="#dedede"/><rect x="279.55" y="582.6" width="0.9" height="24.5" fill="#dedede"/><rect x="457.55" y="582.6" width="0.9" height="24.5" fill="#dedede"/><rect x="637.05" y="582.6" width="0.9" height="24.5" fill="#dedede"/><rect x="774.55" y="582.6" width="0.9" height="24.5" fill="#dedede"/><rect x="905.95" y="582.6" width="0.9" height="24.5" fill="#dedede"/><rect x="56.4" y="582.6" width="0.9" height="24.5" fill="#dedede"/><rect x="950.7" y="582.6" width="0.9" height="24.5" fill="#dedede"/><rect x="73.5" y="589.1" width="10" height="10" rx="0" fill="#e4e4e4" stroke="#c9c9c9" stroke-width="1"/></svg>
<span style="left:104.6px;top:588.52px;font-size:11.5px;line-height:13.8px;color:#f0525e;transform:scaleX(1.0000);">*</span>
<svg width="966" height="631" viewBox="0 0 966 631"><rect x="113.9" y="586.1" width="114.4" height="16.7" rx="1.5" fill="#e7e7e7"/></svg>
<span style="left:118.2px;top:590.08px;font-size:8.5px;line-height:10.2px;color:#222;transform:scaleX(1.0922);">Manufacturer</span>
<svg width="966" height="631" viewBox="0 0 966 631"><svg x="218.6" y="593.2" width="6.00" height="3.60" viewBox="0 0 6 3.6"><path d="M0.7 0.6 L3 2.9 L5.3 0.6" fill="none" stroke="#b0b0b0" stroke-width="0.9"/></svg><rect x="286.7" y="586.6" width="113.6" height="15.7" rx="0.5" fill="#fff" stroke="#e4e5e7" stroke-width="1"/></svg>
<span style="left:290.5px;top:590.08px;font-size:8.5px;line-height:10.2px;color:#555;transform:scaleX(0.8828);">ISF TEST</span>
<svg width="966" height="631" viewBox="0 0 966 631"><svg x="360.4" y="588.3" width="10.8" height="10.8" viewBox="0 0 10.8 10.8"><path d="M6.2 2.6 H1.6 Q.9 2.6 .9 3.3 V9.2 Q.9 9.9 1.6 9.9 H8.6 Q9.3 9.9 9.3 9.2 V5.8" fill="none" stroke="#8ab4e0" stroke-width=".9"/><path d="M3.6 7 C3.8 4.6 5.6 2.4 9.4 2.2 M7.6 .4 L9.8 2.2 L7.8 4.2" fill="none" stroke="#8ab4e0" stroke-width=".9"/></svg><svg x="375.5" y="590.3" width="8" height="8" viewBox="0 0 8 8"><path d="M1.25 1.25 L6.75 6.75 M6.75 1.25 L1.25 6.75" stroke="#6a6a6a" stroke-width="0.95" fill="none"/></svg><rect x="387.8" y="587.1" width="0.8" height="14.7" fill="#ececec"/><svg x="391.9" y="593.3" width="6.00" height="3.60" viewBox="0 0 6 3.6"><path d="M0.7 0.6 L3 2.9 L5.3 0.6" fill="none" stroke="#b5b5b5" stroke-width="0.9"/></svg><rect x="462.2" y="585.5" width="172.7" height="17.9" rx="2.1" fill="#f9d3d6"/><rect x="463.3" y="586.6" width="170.5" height="15.7" rx="1" fill="#fff" stroke="#ee7d86" stroke-width="1"/></svg>
<span style="left:467.8px;top:590.13px;font-size:8.6px;line-height:10.32px;color:#444;transform:scaleX(0.9150);">12"31</span>
<svg width="966" height="631" viewBox="0 0 966 631"><rect x="621.6" y="591.5" width="2" height="5" rx="0.6" fill="#f0222e"/><rect x="621.6" y="597.2" width="2" height="1.8" rx="0.6" fill="#f0222e"/><rect x="641.2" y="585.5" width="127.7" height="17.9" rx="2.1" fill="#f9d3d6"/><rect x="642.3" y="586.6" width="125.5" height="15.7" rx="1" fill="#fff" stroke="#ee7d86" stroke-width="1"/></svg>
<span style="left:646.6px;top:590.13px;font-size:8.6px;line-height:10.32px;color:#444;transform:scaleX(0.8326);">BE-LLEVUE</span>
<svg width="966" height="631" viewBox="0 0 966 631"><rect x="756.8" y="591.5" width="2" height="5" rx="0.6" fill="#f0222e"/><rect x="756.8" y="597.2" width="2" height="1.8" rx="0.6" fill="#f0222e"/><rect x="778.7" y="586.6" width="124.7" height="15.7" rx="0.5" fill="#fff" stroke="#e4e5e7" stroke-width="1"/></svg>
<span style="left:782.7px;top:590.28px;font-size:8.5px;line-height:10.2px;color:#444;transform:scaleX(0.9346);">UNITED STATES</span>
<svg width="966" height="631" viewBox="0 0 966 631"><svg x="877.5" y="590.5" width="8" height="8" viewBox="0 0 8 8"><path d="M1.1 1.1 L6.9 6.9 M6.9 1.1 L1.1 6.9" stroke="#8a8a8a" stroke-width="0.9" fill="none"/></svg><rect x="890.3" y="587.1" width="0.8" height="14.7" fill="#ececec"/><svg x="893.75" y="593.51" width="9.30" height="5.58" viewBox="0 0 6 3.6"><path d="M0.7 0.6 L3 2.9 L5.3 0.6" fill="none" stroke="#8c8c8c" stroke-width="0.7"/></svg><rect x="914.6" y="584.4" width="24.4" height="19.1" fill="#ef5561"/><svg x="921.4" y="587.5" width="11.4" height="10.6" viewBox="0 0 9 8.4"><path d="M6.6 4.6 V6.6 Q6.6 7.6 5.6 7.6 H1.8 Q.8 7.6 .8 6.6 V2.6 Q.8 1.6 1.8 1.6 H4.4" fill="none" stroke="#fff" stroke-width=".95"/><path d="M3.4 5.4 L3.7 3.9 L6.9 .7 L8.1 1.9 L4.9 5.1 Z" fill="#fff"/></svg></svg>
<div style="left:420px;top:627px;width:132px;height:7px;background:radial-gradient(ellipse at center, rgba(120,200,190,.22), rgba(255,255,255,0) 70%);"></div>
<svg width="966" height="631" viewBox="0 0 966 631"><rect x="311.5" y="16.6" width="352" height="48.7" rx="1" fill="#f2dede" stroke="#ebcfd3" stroke-width="1"/></svg>
<span style="left:322px;top:29.16px;font-size:9.3px;line-height:11.16px;color:#a94442;transform:scaleX(1.0001);">ISF Submission Fail</span>
<span style="left:322px;top:42.96px;font-size:9.3px;line-height:11.16px;color:#a94442;transform:scaleX(1.0420);">Record(referenceData) Field(ref_no) This field does not accept symbols: "</span>
<svg width="966" height="631" viewBox="0 0 966 631"><svg x="646.6" y="25.4" width="8" height="8" viewBox="0 0 8 8"><path d="M1.2000000000000002 1.2000000000000002 L6.8 6.8 M6.8 1.2000000000000002 L1.2000000000000002 6.8" stroke="#b8a3a3" stroke-width="0.8" fill="none"/></svg><rect x="302.65" y="9.15" width="367.5" height="63" rx="1.2" fill="none" stroke="#fd0000" stroke-width="3.7"/><rect x="522.85" y="127.05" width="211.3" height="27.9" rx="1.2" fill="none" stroke="#fd0000" stroke-width="3.7"/><rect x="300.85" y="212.65" width="201.3" height="21.9" rx="1.2" fill="none" stroke="#fd0000" stroke-width="3.7"/><rect x="455.95" y="406.35" width="182.3" height="202.8" rx="1.2" fill="none" stroke="#fd0000" stroke-width="3.7"/><rect x="637.95" y="406.35" width="136.8" height="202.8" rx="1.2" fill="none" stroke="#fd0000" stroke-width="3.7"/><rect x="900.25" y="406.35" width="53.5" height="202.8" rx="1.2" fill="none" stroke="#fd0000" stroke-width="3.7"/></svg>
</body></html>
